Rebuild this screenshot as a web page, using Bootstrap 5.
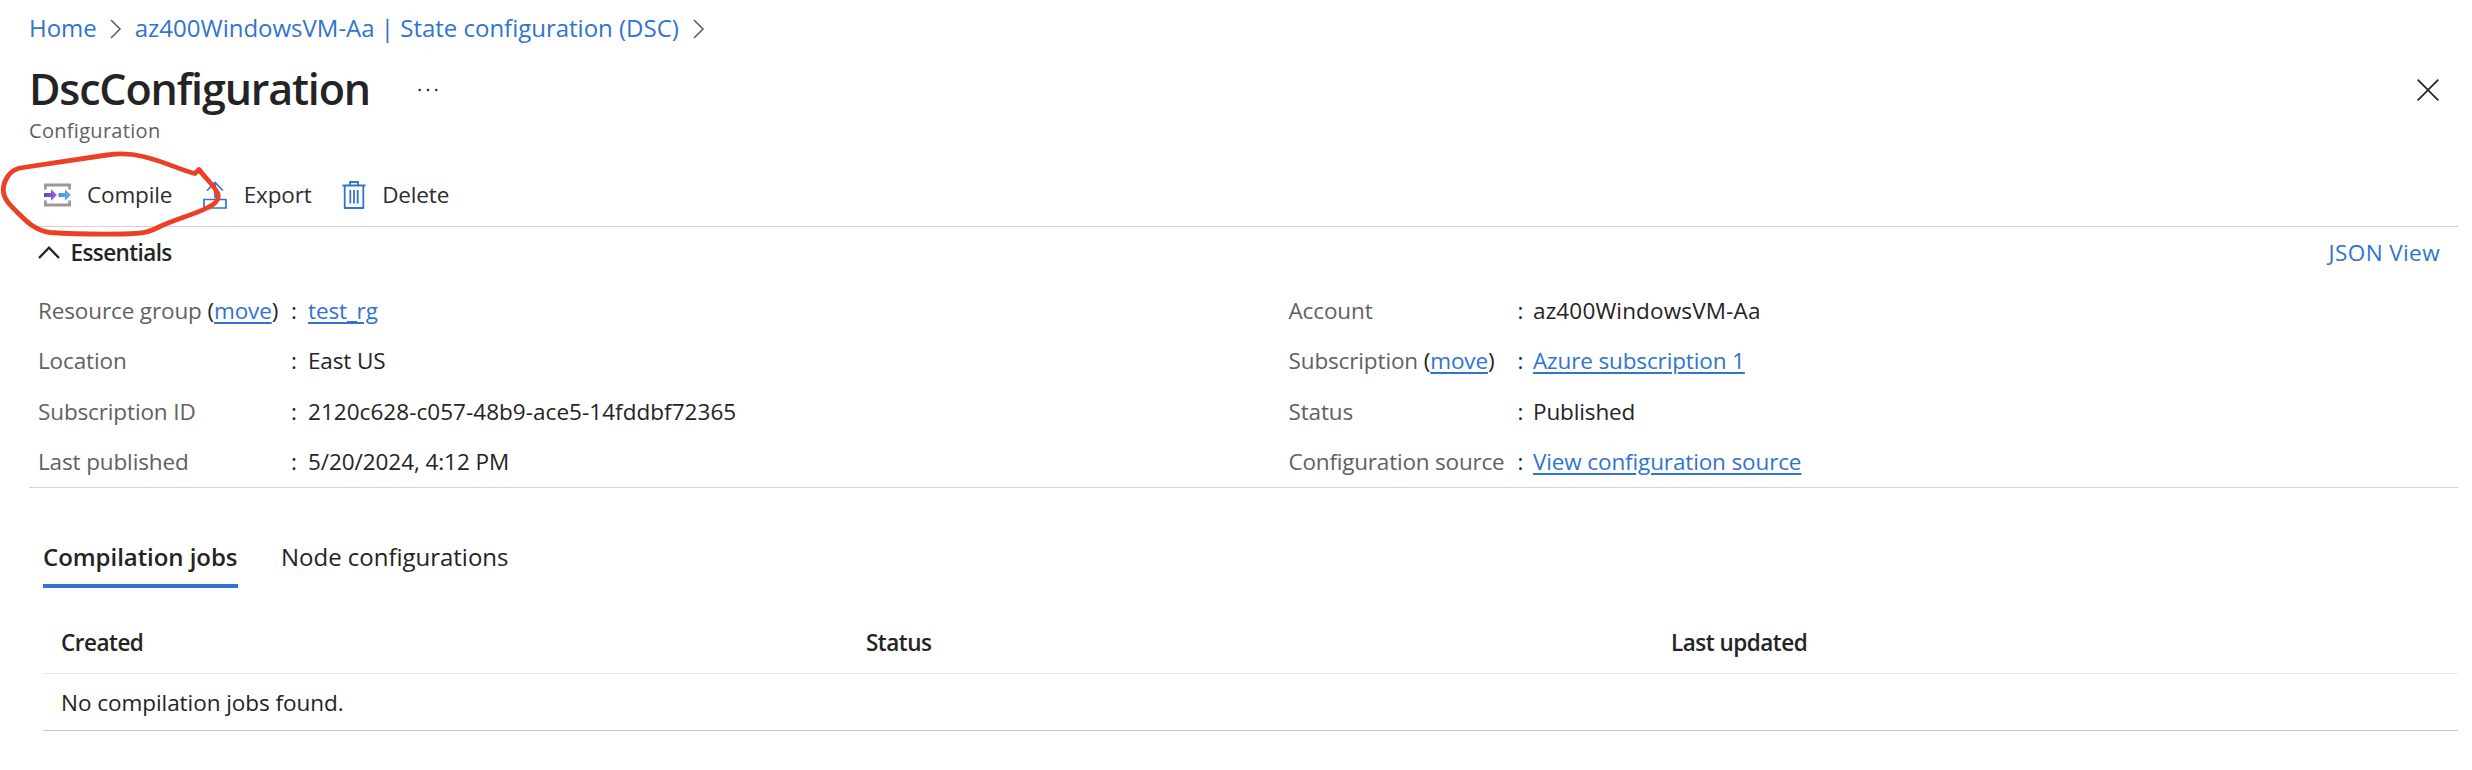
<!DOCTYPE html>
<html lang="en">
<head>
<meta charset="utf-8">
<title>DscConfiguration</title>
<link rel="stylesheet" href="https://cdn.jsdelivr.net/npm/bootstrap@5.3.0/dist/css/bootstrap.min.css">
<script src="https://cdn.jsdelivr.net/npm/bootstrap@5.3.0/dist/js/bootstrap.bundle.min.js"></script>
<style>
  body { font: 400 22.5px/36px "Open Sans", sans-serif; letter-spacing: -.13px; color: #242424; background: #fff; }
  a { color: #2f74d0; text-decoration-thickness: 2px; text-underline-offset: 3px; }
  svg { display: block; flex: none; }
  .page { width: 2458px; padding: 10px 0 0 29px; }
  .crumbs { font-size: 24px; letter-spacing: -.01px; }
  .heading { margin-top: 15px; height: 55px; }
  .heading h1 { font-size: 43px; line-height: 55px; font-weight: 600; letter-spacing: -1.15px; width: 389px; }
  .close-x { margin: 2px 19px 0 0; }
  .subtitle { font-size: 20px; line-height: 30px; letter-spacing: .3px; color: #616161; }
  .toolbar { padding: 31px 0 13px 13px; border-bottom: 1px solid #d2d2d2; }
  .toolbar span { letter-spacing: -.15px; color: #2d2d2d; }
  .essentials-head { padding: 8px 18px 0 9px; }
  .semi { font-weight: 600; letter-spacing: -.5px; }
  .essentials { margin: 15px 0 0; border-bottom: 1px solid #d2d2d2; height: 202px; padding-left: 9px; }
  .facts { display: grid; grid-template-columns: 253px 17px 1fr; grid-auto-rows: 50.25px; align-items: center; margin: 0; width: 1250.5px; }
  .facts.right { grid-template-columns: 229px 15.5px 1fr; width: auto; }
  .facts dt, .facts dd { margin: 0; font-weight: 400; white-space: nowrap; }
  .facts dt { color: #616161; }
  .facts dt i { font-style: normal; color: #242424; }
  .tabs { margin: 51px 0 0 14px; gap: 43px; font-size: 24px; letter-spacing: -.02px; }
  .tabs .tab { height: 49px; }
  .tabs .current { font-weight: 600; width: 195px; border-bottom: 4px solid #2f74d0; white-space: nowrap; letter-spacing: -.05px; }
  .jobs { margin: 23px 0 0 14px; width: 2415px; table-layout: fixed; border-collapse: separate; border-spacing: 0; }
  .jobs th { height: 63px; padding: 2px 0 0 18px; border-bottom: 1px solid #e9e9e9; }
  .jobs td { height: 57px; padding: 1px 0 0 18px; border-bottom: 1px solid #c8c8c8; letter-spacing: -.05px; }
  .scribble { left: 0; top: 145px; pointer-events: none; }
</style>
</head>
<body class="position-relative overflow-hidden">
<main class="page">
  <nav class="crumbs d-flex align-items-center">
    <a class="text-decoration-none" href="#">Home</a>
    <svg width="12" height="20" style="margin:2px 13px 0 13px" viewBox="0 0 12 20" fill="none" stroke="#616161" stroke-width="1.6"><path d="M1 1l9 9-9 9"/></svg>
    <a class="text-decoration-none" href="#">az400WindowsVM-Aa | State configuration (DSC)</a>
    <svg width="12" height="20" style="margin:2px 0 0 14px" viewBox="0 0 12 20" fill="none" stroke="#616161" stroke-width="1.6"><path d="M1 1l9 9-9 9"/></svg>
  </nav>
  <div class="heading d-flex align-items-center">
    <h1 class="m-0">DscConfiguration</h1>
    <svg width="20" height="4" style="margin-top:2px" fill="#333"><circle cx="1.7" cy="2" r="1.3"/><circle cx="10" cy="2" r="1.3"/><circle cx="18.3" cy="2" r="1.3"/></svg>
    <svg class="close-x ms-auto" width="22" height="22" viewBox="0 0 22 22" stroke="#242424" stroke-width="1.7"><path d="M.7.7l20.6 20.6M21.3.7L.7 21.3"/></svg>
  </div>
  <div class="subtitle">Configuration</div>
  <div class="toolbar d-flex align-items-center">
    <svg width="27" height="24" viewBox="0 0 27 24" style="margin:0 16px 1px 2px">
      <defs>
        <linearGradient id="violet"><stop stop-color="#7040bd"/><stop offset="1" stop-color="#9563ea"/></linearGradient>
        <linearGradient id="sky"><stop stop-color="#4890dc"/><stop offset="1" stop-color="#62b1f3"/></linearGradient>
      </defs>
      <path d="M1.3 6.500V2h24.400v4.500M1.300 17.500V22h24.400v-4.500" fill="none" stroke="#999" stroke-width="3"/>
      <path d="M0 10h7V6.300l6 5.700-6 5.700V14H0z" fill="url(#violet)"/>
      <path d="M14.500 10h6.500V6.300l6 5.700-6 5.700V14h-6.500z" fill="url(#sky)"/>
    </svg>
    <span>Compile</span>
    <svg width="24" height="28" viewBox="0 0 24 28" style="margin:0 0 1px 30.500px" fill="none" stroke="#2f74d0" stroke-width="1.700"><path d="M1 18.500h22v8.500H1zM12 17V1.500M4 9.500l8-8 8 8"/></svg>
    <span style="margin-left:17px">Export</span>
    <svg width="24" height="28" viewBox="0 0 24 28" style="margin:0 0 1px 30px" fill="none" stroke="#2f74d0" stroke-width="1.800"><path d="M.5 4.500h23M8 4V1h8v3M2.700 4.500V27h18.600V4.500M8.300 9v13.500M12 9v13.500M15.700 9v13.500"/></svg>
    <span style="margin-left:16.500px">Delete</span>
  </div>
  <div class="essentials-head d-flex align-items-center">
    <svg width="22" height="13" viewBox="0 0 22 13" style="margin:0 10.500px 2px 0" fill="none" stroke="#242424" stroke-width="2.300"><path d="M1 12L11 1.700 21 12"/></svg>
    <span class="semi" style="letter-spacing:-.6px">Essentials</span>
    <a class="text-decoration-none ms-auto" style="letter-spacing:.4px" href="#">JSON View</a>
  </div>
  <section class="essentials d-flex">
    <dl class="facts">
      <dt>Resource group <i>(</i><a href="#">move</a><i>)</i></dt><dd>:</dd><dd><a href="#">test_rg</a></dd>
      <dt>Location</dt><dd>:</dd><dd>East US</dd>
      <dt>Subscription ID</dt><dd>:</dd><dd style="letter-spacing:.04px">2120c628-c057-48b9-ace5-14fddbf72365</dd>
      <dt>Last published</dt><dd>:</dd><dd style="letter-spacing:-.07px">5/20/2024, 4:12 PM</dd>
    </dl>
    <dl class="facts right">
      <dt>Account</dt><dd>:</dd><dd style="letter-spacing:.15px">az400WindowsVM-Aa</dd>
      <dt>Subscription <i>(</i><a href="#">move</a><i>)</i></dt><dd>:</dd><dd><a href="#">Azure subscription 1</a></dd>
      <dt>Status</dt><dd>:</dd><dd>Published</dd>
      <dt style="letter-spacing:-.2px">Configuration source</dt><dd>:</dd><dd><a href="#">View configuration source</a></dd>
    </dl>
  </section>
  <div class="tabs d-flex">
    <div class="tab current">Compilation jobs</div>
    <div class="tab">Node configurations</div>
  </div>
  <table class="jobs">
    <thead><tr><th class="semi">Created</th><th class="semi">Status</th><th class="semi">Last updated</th></tr></thead>
    <tbody><tr><td colspan="3">No compilation jobs found.</td></tr></tbody>
  </table>
</main>
<svg class="scribble position-absolute" width="230" height="100" viewBox="0 145 230 100" fill="none" stroke="#eb4025" stroke-width="4.800" stroke-linejoin="round" stroke-linecap="round"><path d="M199 169.500L195 173.500C180 170 162 160.500 143 156.500C133 154 118 153.500 107 155C80 159 48 164 20 168C10 170 3.500 180 3.300 190C3.300 199 10 205 18 213C28 223 36 230.500 50 232.500C72 234 100 234.300 123 234C145 233.500 149 232 160 226.500C175 219 196 214 208 207.500C217 203 220 199 217.500 193C213 184 205 178 199 169.500z"/></svg>
</body>
</html>
